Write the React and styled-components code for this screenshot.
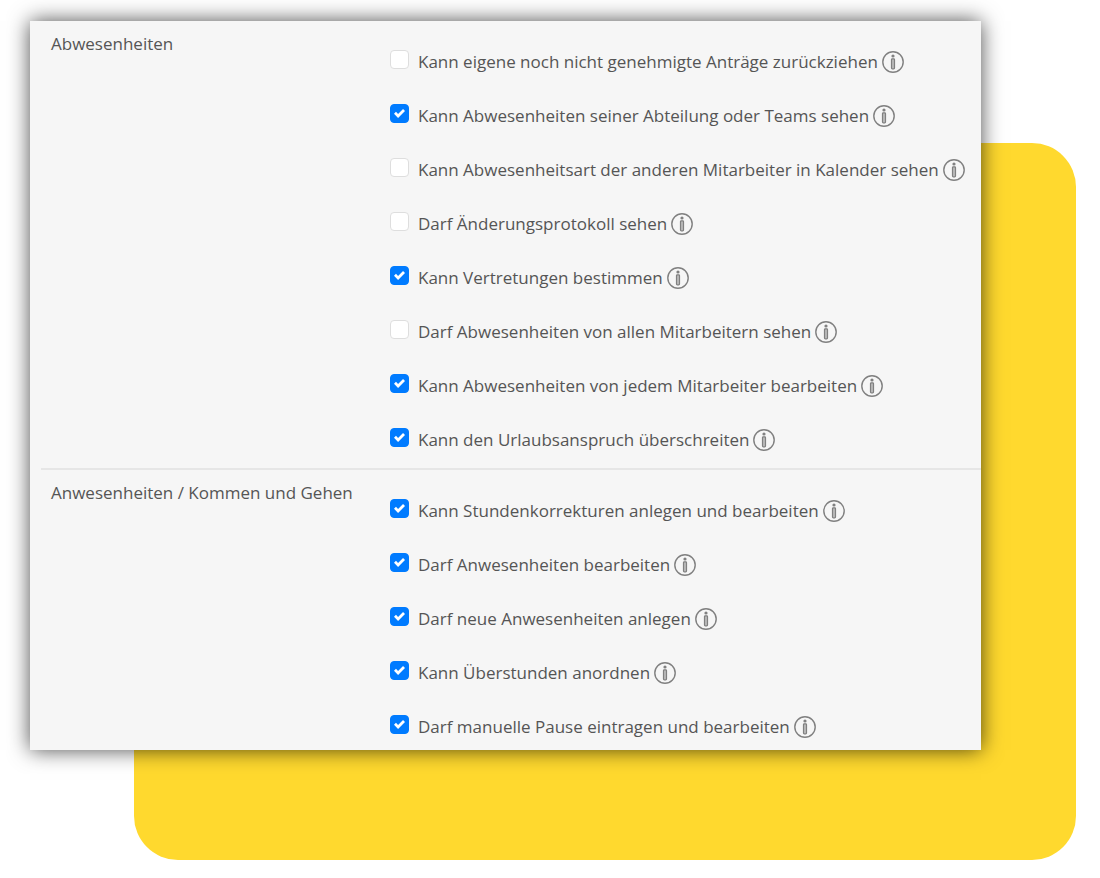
import React from "react";
import styled, { createGlobalStyle } from "styled-components";

const GlobalStyle = createGlobalStyle`
  *, *::before, *::after {
    box-sizing: border-box;
  }
  body {
    margin: 0;
    background: #fff;
    color: #555;
    font-family: "Open Sans", "Noto Sans", sans-serif;
    font-size: 17px;
    line-height: 24px;
  }
`;

const Stage = styled.main`
  display: grid;
  padding: 21px 24px 18px 30px;
`;

const Backdrop = styled.div`
  grid-area: 1 / 1;
  margin: 122px 0 0 104px;
  border-radius: 44px;
  background: #ffd92e;
`;

const Panel = styled.form`
  grid-area: 1 / 1;
  margin: 0 95px 110px 0;
  padding-left: 11px;
  background: #f6f6f6;
  box-shadow: 0 0 20px rgba(0, 0, 0, 0.7);
`;

const StyledSection = styled.section`
  display: grid;
  grid-template-columns: 339px 1fr;
  padding: 0 0 16px 10px;
  border-bottom: 2px solid #e6e6e6;
  &:last-child {
    padding-bottom: 11px;
    border-bottom: none;
  }
`;

const SectionTitle = styled.h2`
  margin: 11px 0 0;
  font-size: 17px;
  font-weight: 400;
`;

const PermissionList = styled.ul`
  display: flex;
  flex-direction: column;
  row-gap: 30px;
  margin: 29px 0 0;
  padding: 0;
  list-style: none;
`;

const PermissionRow = styled.li`
  display: flex;
  align-items: flex-start;
  height: 24px;
`;

const CheckboxBox = styled.span`
  display: grid;
  flex: none;
  margin-right: 9px;
  svg {
    grid-area: 1 / 1;
    place-self: center;
    width: 11px;
    height: 11px;
    pointer-events: none;
  }
`;

const Checkbox = styled.input`
  grid-area: 1 / 1;
  appearance: none;
  width: 19px;
  height: 19px;
  margin: 0;
  border: 1px solid #dedede;
  border-radius: 4px;
  background: #fff;
  &:checked {
    border-color: #007bff;
    background: #007bff;
  }
  &:not(:checked) + svg {
    display: none;
  }
`;

const PermissionLabel = styled.label`
  white-space: nowrap;
`;

const InfoButton = styled.button`
  display: block;
  flex: none;
  margin: 1px 0 0 4px;
  padding: 0;
  border: none;
  background: none;
  color: #808080;
  svg {
    display: block;
  }
`;

const InfoIcon = () => (
  <svg width="22" height="22" viewBox="0 0 22 22" fill="none" stroke="currentColor">
    <circle cx="11" cy="11" r="10.2" strokeWidth="1.4" />
    <circle cx="11" cy="5" r="1.6" fill="currentColor" stroke="none" />
    <rect x="9.5" y="7.8" width="3" height="10" rx="0.8" fill="#bbb" strokeWidth="1.2" />
  </svg>
);

const sections = [
  {
    title: "Abwesenheiten",
    permissions: [
      { id: "antraege", label: "Kann eigene noch nicht genehmigte Anträge zurückziehen", checked: false },
      { id: "abteilung", label: "Kann Abwesenheiten seiner Abteilung oder Teams sehen", checked: true },
      { id: "kalender", label: "Kann Abwesenheitsart der anderen Mitarbeiter in Kalender sehen", checked: false },
      { id: "protokoll", label: "Darf Änderungsprotokoll sehen", checked: false },
      { id: "vertretungen", label: "Kann Vertretungen bestimmen", checked: true },
      { id: "alle", label: "Darf Abwesenheiten von allen Mitarbeitern sehen", checked: false },
      { id: "jeder", label: "Kann Abwesenheiten von jedem Mitarbeiter bearbeiten", checked: true },
      { id: "urlaub", label: "Kann den Urlaubsanspruch überschreiten", checked: true },
    ],
  },
  {
    title: "Anwesenheiten / Kommen und Gehen",
    permissions: [
      { id: "korrekturen", label: "Kann Stundenkorrekturen anlegen und bearbeiten", checked: true },
      { id: "bearbeiten", label: "Darf Anwesenheiten bearbeiten", checked: true },
      { id: "anlegen", label: "Darf neue Anwesenheiten anlegen", checked: true },
      { id: "ueberstunden", label: "Kann Überstunden anordnen", checked: true },
      { id: "pause", label: "Darf manuelle Pause eintragen und bearbeiten", checked: true },
    ],
  },
];

const Permission = ({ id, label, checked }) => (
  <PermissionRow>
    <CheckboxBox>
      <Checkbox type="checkbox" id={id} defaultChecked={checked} />
      <svg viewBox="0 0 8 8" fill="#fff">
        <path d="M6.564.75l-3.59 3.612-1.538-1.55L0 4.26 2.974 7.25 8 2.193z" />
      </svg>
    </CheckboxBox>
    <PermissionLabel htmlFor={id}>{label}</PermissionLabel>
    <InfoButton type="button" aria-label="Info">
      <InfoIcon />
    </InfoButton>
  </PermissionRow>
);

const App = () => {
  return (
    <>
      <GlobalStyle />
      <Stage>
        <Backdrop />
        <Panel>
          {sections.map(({ title, permissions }) => (
            <StyledSection key={title}>
              <SectionTitle>{title}</SectionTitle>
              <PermissionList>
                {permissions.map((permission) => (
                  <Permission key={permission.id} {...permission} />
                ))}
              </PermissionList>
            </StyledSection>
          ))}
        </Panel>
      </Stage>
    </>
  );
};

export default App;
